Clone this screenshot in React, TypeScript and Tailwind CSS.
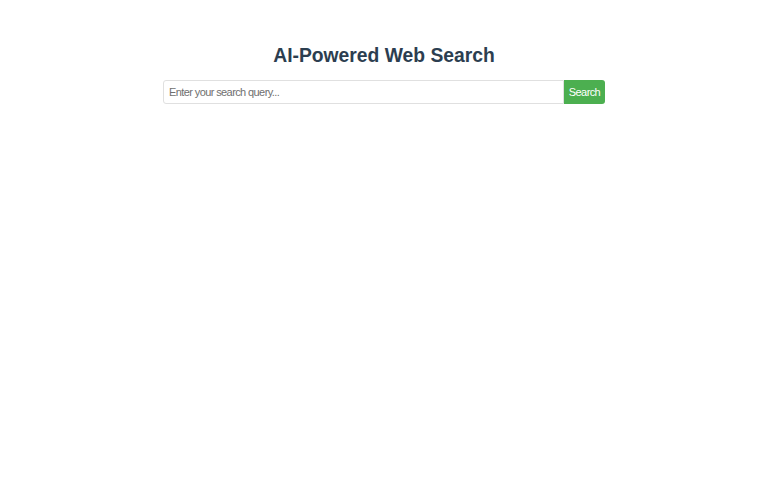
export default function App() {
  return (
    <div className="min-h-[480px] w-full bg-white [font-family:'Liberation_Sans',Arial,sans-serif]">
      <div className="mx-auto flex w-[442px] flex-col items-center pt-[44px]">
        <h1 className="text-[19.3px] font-bold leading-[24px] text-[#2c3e50]">
          AI-Powered Web Search
        </h1>
        <div className="mt-[12px] flex w-full">
          <input
            type="text"
            placeholder="Enter your search query..."
            className="h-[24px] flex-1 rounded-l-[3px] border border-[#e0e0e0] px-[5px] text-[11px] tracking-[-0.6px] text-[#333] placeholder:text-[#6f6f6f] outline-none"
          />
          <button className="h-[24px] w-[41px] rounded-r-[3px] bg-[#4caf50] text-[11px] tracking-[-0.6px] text-white">
            Search
          </button>
        </div>
      </div>
    </div>
  );
}
